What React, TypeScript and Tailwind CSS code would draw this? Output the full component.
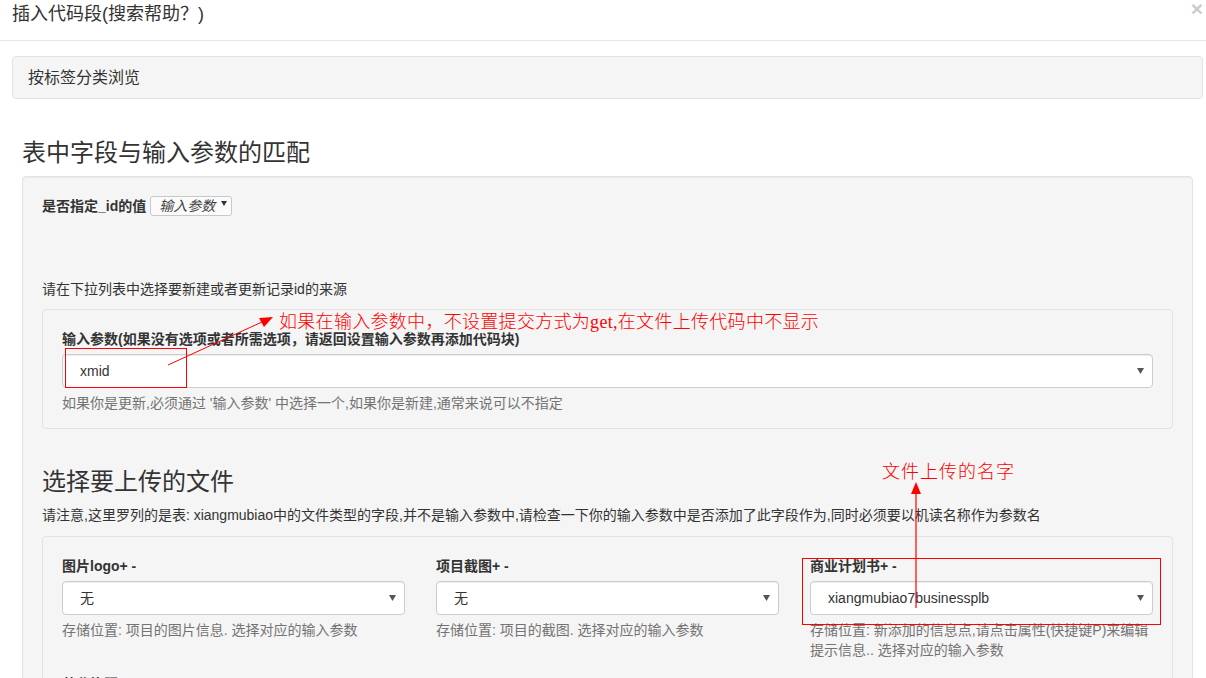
import React from 'react'

const font = { fontFamily: '"Liberation Sans", "Noto Sans CJK SC", sans-serif' }
const noteFont = { fontFamily: '"Liberation Serif", "Noto Sans CJK SC", serif', fontWeight: 300 }

function Caret() {
  return (
    <svg width="7" height="6" viewBox="0 0 7 6" className="shrink-0">
      <path d="M0 0h7L3.5 6z" fill="#555" />
    </svg>
  )
}

function FakeSelect({ value }: { value: string }) {
  return (
    <div
      className="flex h-[34px] items-center justify-between rounded-[4px] border border-[#cccccc] bg-white pl-[17px] pr-[8px] text-[14px]"
      style={{ boxShadow: 'inset 0 1px 1px rgba(0,0,0,.075)' }}
    >
      <span className="text-[#333]">{value}</span>
      <Caret />
    </div>
  )
}

function FileField({ label, value, help }: { label: string; value: string; help: string }) {
  return (
    <div>
      <div className="text-[14px] font-bold leading-[20px] text-[#333]">{label}</div>
      <div className="mt-[5px]">
        <FakeSelect value={value} />
      </div>
      <div className="mt-[5px] text-[14px] leading-[20px] text-[#737373]">{help}</div>
    </div>
  )
}

export default function App() {
  return (
    <div className="relative h-[678px] w-[1206px] overflow-hidden bg-white text-[14px] text-[#333]" style={font}>
      {/* modal header */}
      <div className="flex h-[41px] items-start justify-between border-b border-[#e5e5e5] pl-[12px] pr-[3px]">
        <h4 className="pt-[3px] text-[18px] leading-[22px] text-[#333]">插入代码段(搜索帮助？)</h4>
        <span className="mt-[-2px] text-[21px] font-bold leading-[21px] text-[#000] opacity-20">×</span>
      </div>

      <div className="pl-[12px] pr-[3px]">
        <div className="mt-[15px] flex h-[43px] items-center rounded-[4px] border border-[#e3e3e3] bg-[#f5f5f5] px-[15px] text-[16px]">
          按标签分类浏览
        </div>

        <div className="px-[10px]">
          <h3 className="mt-[40px] text-[24px] leading-[27px] text-[#333]">表中字段与输入参数的匹配</h3>

          <div
            className="mt-[10px] rounded-[4px] border border-[#e3e3e3] bg-[#f5f5f5] px-[19px] pt-[19px] pb-[40px]"
            style={{ boxShadow: 'inset 0 1px 1px rgba(0,0,0,.05)' }}
          >
            <div className="flex h-[20px] items-center">
              <span className="font-bold leading-[20px]">是否指定_id的值</span>
              <span className="ml-[4px] flex h-[20px] items-start gap-[6px] rounded-[3px] border border-[#c8c8c8] bg-[#fbfbfb] pl-[8px] pr-[4px]">
                <span className="text-[14px] italic leading-[18px] text-[#444]">输入参数</span>
                <svg width="6" height="5" viewBox="0 0 6 5" className="mt-[4px]">
                  <path d="M0 0h6L3 5z" fill="#333" />
                </svg>
              </span>
            </div>

            <div className="mt-[63px] leading-[20px]">请在下拉列表中选择要新建或者更新记录id的来源</div>

            <div className="mt-[10px] rounded-[4px] border border-[#e3e3e3] bg-[#f5f5f5] px-[19px] pt-[19px] pb-[15px]">
              <div className="font-bold leading-[20px]">输入参数(如果没有选项或者所需选项，请返回设置输入参数再添加代码块)</div>
              <div className="mt-[5px]">
                <FakeSelect value="xmid" />
              </div>
              <div className="mt-[5px] leading-[20px] text-[#737373]">
                如果你是更新,必须通过 '输入参数' 中选择一个,如果你是新建,通常来说可以不指定
              </div>
            </div>

            <h3 className="mt-[39px] text-[24px] leading-[27px] text-[#333]">选择要上传的文件</h3>
            <div className="mt-[10px] leading-[20px]">
              请注意,这里罗列的是表: xiangmubiao中的文件类型的字段,并不是输入参数中,请检查一下你的输入参数中是否添加了此字段作为,同时必须要以机读名称作为参数名
            </div>

            <div className="mt-[11px] rounded-[4px] border border-[#e3e3e3] bg-[#f5f5f5] px-[19px] pt-[19px] pb-[19px]">
              <div className="grid grid-cols-3 gap-x-[31px] gap-y-[14px]">
                <FileField label="图片logo+ -" value="无" help="存储位置: 项目的图片信息. 选择对应的输入参数" />
                <FileField label="项目截图+ -" value="无" help="存储位置: 项目的截图. 选择对应的输入参数" />
                <FileField
                  label="商业计划书+ -"
                  value="xiangmubiao7businessplb"
                  help="存储位置: 新添加的信息点,请点击属性(快捷键P)来编辑提示信息.. 选择对应的输入参数"
                />
                <FileField label="营业执照+ -" value="无" help="存储位置: 项目的营业执照. 选择对应的输入参数" />
              </div>
            </div>
          </div>
        </div>
      </div>

      {/* annotations drawn over the page */}
      <div className="pointer-events-none absolute left-[65px] top-[348px] h-[40px] w-[122px] border border-[#ff0000]" />
      <div className="pointer-events-none absolute left-[802px] top-[558px] h-[67px] w-[359px] border border-[#ff0000]" />
      <svg className="pointer-events-none absolute left-0 top-0" width="1206" height="678">
        <line x1="168" y1="365" x2="262" y2="322" stroke="#ff0000" strokeWidth="1" />
        <path d="M273 317 L259 318 L264 327 Z" fill="#ff0000" />
        <line x1="916" y1="608" x2="916" y2="494" stroke="#ff0000" strokeWidth="1.2" />
        <path d="M916 482 L911 494 L921 494 Z" fill="#ff0000" />
      </svg>
      <div
        className="pointer-events-none absolute left-[279px] top-[310px] text-[18px] leading-[24px] tracking-[0.3px] text-[#ff0000]"
        style={noteFont}
      >
        如果在输入参数中，不设置提交方式为get,在文件上传代码中不显示
      </div>
      <div
        className="pointer-events-none absolute left-[882px] top-[460px] text-[18px] leading-[24px] tracking-[1px] text-[#ff0000]"
        style={noteFont}
      >
        文件上传的名字
      </div>
    </div>
  )
}
